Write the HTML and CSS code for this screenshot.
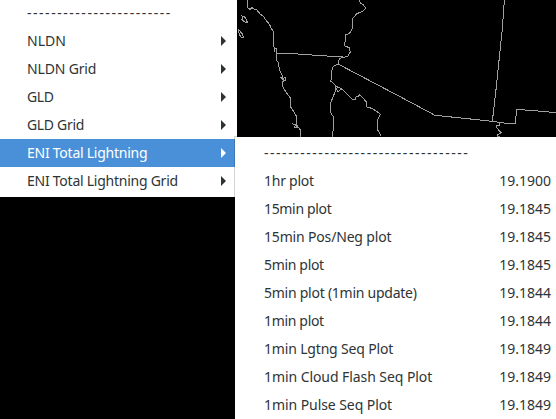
FILE: index.html
```html
<!DOCTYPE html>
<html lang="en">
<head>
    <meta charset="UTF-8">
    <title>Lightning Menu</title>
    <link rel="stylesheet" href="styles.css">
</head>
<body>
    <div class="screen">
        <div class="menu main-menu">
            <div class="item separator">------------------------</div>
            <div class="item"><span>NLDN</span><span class="arrow"></span></div>
            <div class="item"><span class="snug">NLDN Grid</span><span class="arrow"></span></div>
            <div class="item"><span class="tight">GLD</span><span class="arrow"></span></div>
            <div class="item"><span class="tight">GLD Grid</span><span class="arrow"></span></div>
            <div class="item selected"><span class="narrow">ENI Total Lightning</span><span class="arrow"></span></div>
            <div class="item"><span class="narrow">ENI Total Lightning Grid</span><span class="arrow"></span></div>
        </div>

        <div class="side">
            <svg class="map" viewBox="15 0 957 411" shape-rendering="crispEdges">
                <!-- Pacific coast -->
                <path d="M47 0V24L54 28L60 23L66 27L75 30L84 42L95 50L103 62L113 74L118 86L125 96V140L133 147V180L139 188L143 212L150 226V236L160 232L162 240L152 244V260L162 276L175 294V320L185 334L193 348V374L205 390V411M146 232L158 244M181 370L198 382H188L190 372M128 140V156"/>
                <!-- islands -->
                <path d="M26 46L40 52L46 67L38 66L30 58L34 50M19 88L22 104L29 113H35L31 102Z"/>
                <!-- Colorado River -->
                <path d="M382 0L385 10L394 14L401 25L393 33L373 42L362 56L361 86L352 101L341 104L338 138L352 143L355 156L347 170L332 172L322 176L318 192"/>
                <!-- gulf coast -->
                <path d="M318 192L303 200L299 212V236L296 243L310 256V275L303 290L296 310L297 340L304 350V385L301 411M310 258L328 266L318 276L310 262M328 266L345 282L361 298H370L373 288L379 290L381 284L392 292L402 305V320L422 326L445 342L437 360V390L448 409"/>
                <!-- borders -->
                <path d="M133 160L182 161L268 167L332 171M318 192L508 292L609 346L678 353L781 364L822 370H850L854 328L906 332L972 338M817 0L811 86L802 172L793 260L781 364"/>
                <path d="M801 368V376H793V382L807 398L797 404V409H804"/>
            </svg>

            <div class="menu sub-menu">
                <div class="item separator">----------------------------------</div>
                <div class="item"><span class="narrow">1hr plot</span><span class="time">19.1900</span></div>
                <div class="item"><span class="tight">15min plot</span><span class="time">19.1845</span></div>
                <div class="item"><span class="snug">15min Pos/Neg plot</span><span class="time">19.1845</span></div>
                <div class="item"><span class="tight">5min plot</span><span class="time">19.1845</span></div>
                <div class="item"><span class="narrow">5min plot (1min update)</span><span class="time">19.1844</span></div>
                <div class="item"><span class="tight">1min plot</span><span class="time">19.1844</span></div>
                <div class="item"><span class="snug">1min Lgtng Seq Plot</span><span class="time">19.1849</span></div>
                <div class="item"><span class="loose">1min Cloud Flash Seq Plot</span><span class="time">19.1849</span></div>
                <div class="item"><span class="loose">1min Pulse Seq Plot</span><span class="time">19.1849</span></div>
            </div>
        </div>
    </div>
</body>
</html>
```
FILE: styles.css
```css
body {
    margin: 0;
    background-color: #000;
    overflow: hidden;
    font-family: "Noto Sans", sans-serif;
    font-size: 14px;
    color: #2e3436;
}

.screen {
    display: flex;
    align-items: flex-start;
    width: 556px;
    height: 419px;
    overflow: hidden;
}

.menu {
    background-color: #fff;
    box-sizing: border-box;
}

.main-menu {
    width: 237px;
    height: 198px;
    margin-top: -1px;
    flex-shrink: 0;
}

.item {
    display: flex;
    justify-content: space-between;
    align-items: center;
    height: 28px;
    line-height: 28px;
    white-space: pre;
}

.main-menu .item {
    padding: 0 11px 0 27px;
}

.selected {
    background-color: #4a90d9;
    color: #fff;
}

.arrow {
    border-left: 5px solid #2e3436;
    border-top: 5px solid transparent;
    border-bottom: 5px solid transparent;
}

.selected .arrow {
    border-left-color: #fff;
}

.side {
    width: 319px;
}

.map {
    display: block;
    width: 319px;
    height: 137px;
    background-color: #000;
    fill: none;
    stroke: #a0a0a0;
    stroke-width: 3;
}

.sub-menu {
    position: relative;
    width: 321px;
    height: 282px;
    margin-left: -2px;
    padding-top: 2px;
    box-shadow: 0 0 0 1px rgba(0, 0, 0, 0.17);
}

.sub-menu .item {
    padding: 0 5px 0 29px;
}

.separator {
    letter-spacing: 1.53px;
}

/* label tracking */
.loose {
    letter-spacing: -0.07px;
}

.snug {
    letter-spacing: -0.17px;
}

.narrow {
    letter-spacing: -0.25px;
}

.tight {
    letter-spacing: -0.33px;
}
```
